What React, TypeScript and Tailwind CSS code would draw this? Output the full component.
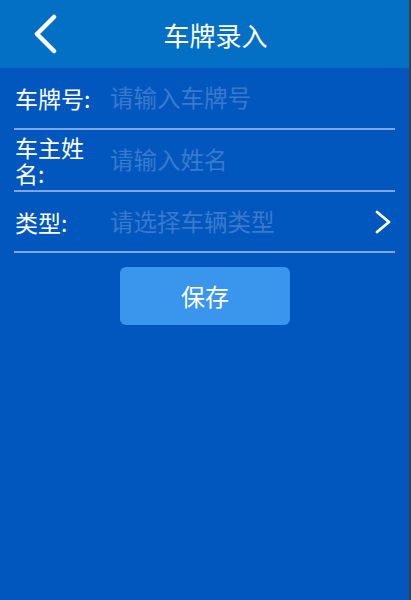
export default function App() {
  const font = { fontFamily: '"Noto Sans CJK SC", "Noto Sans", sans-serif' };

  return (
    <div className="w-[411px] h-[600px] flex bg-[#3a3f4a]" style={font}>
      <div className="w-[409px] h-full flex flex-col bg-[#0157be]">
        {/* header */}
        <div className="h-[68px] shrink-0 bg-[#0370c6] flex items-center relative">
          <svg className="absolute left-[32px] top-[14px]" width="28" height="40" viewBox="0 0 28 40">
            <path d="M22 3 L5 20 L22 37" fill="none" stroke="white" strokeWidth="4.5" strokeLinecap="round" strokeLinejoin="round" />
          </svg>
          <div className="flex-1 text-center text-white text-[26px] leading-none pt-[2px] pl-[22px]">车牌录入</div>
        </div>

        {/* form */}
        <div className="px-[14px]">
          <div className="h-[60px] flex items-center">
            <div className="w-[84px] pl-[1px] text-white text-[23px] leading-[26px]">车牌号:</div>
            <div className="ml-[12px] text-[#3b79cd] text-[23.5px]">请输入车牌号</div>
          </div>
          <div className="h-[2px] bg-[#7fa6dd]" />

          <div className="h-[60px] flex items-center">
            <div className="w-[84px] pl-[1px] text-white text-[23px] leading-[26px]">车主姓名:</div>
            <div className="ml-[12px] text-[#3b79cd] text-[23.5px]">请输入姓名</div>
          </div>
          <div className="h-[2px] bg-[#7fa6dd]" />

          <div className="h-[59px] flex items-center">
            <div className="w-[84px] pl-[1px] text-white text-[23px] leading-[26px]">类型:</div>
            <div className="ml-[12px] flex-1 text-[#3b79cd] text-[23.5px]">请选择车辆类型</div>
            <svg className="mr-[3px]" width="18" height="26" viewBox="0 0 18 26">
              <path d="M3 3 L15 13 L3 23" fill="none" stroke="white" strokeWidth="2.8" strokeLinecap="round" strokeLinejoin="round" />
            </svg>
          </div>
          <div className="h-[2px] bg-[#7fa6dd]" />

          <div className="flex justify-center pt-[14px] pl-[1px]">
            <button className="w-[170px] h-[58px] rounded-[6px] bg-[#3a95ec] text-white text-[24px]">保存</button>
          </div>
        </div>
      </div>
    </div>
  );
}
